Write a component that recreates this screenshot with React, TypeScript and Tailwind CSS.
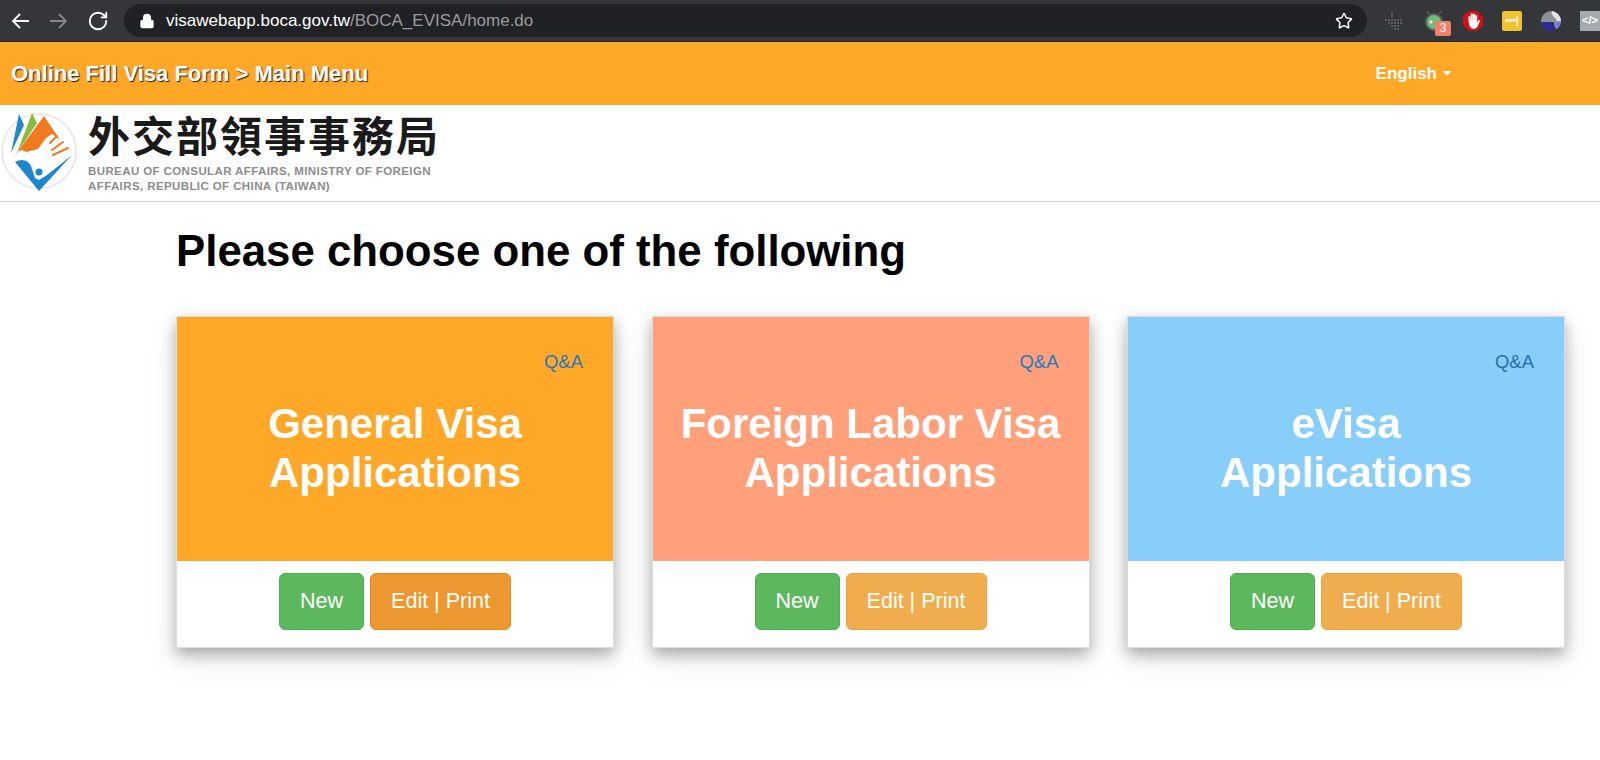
import React from 'react';
import { RotateCw, Lock, Star } from 'lucide-react';

const cards = [
  { title: ['General Visa', 'Applications'], bg: 'bg-[#ffa726]', edit: 'bg-[#ec972f] border-[#e08a1e]', qa: 'text-[#1f78c1]' },
  { title: ['Foreign Labor Visa', 'Applications'], bg: 'bg-[#ffa07a]', edit: 'bg-[#f0ad4e] border-[#eea236]', qa: 'text-[#1f78c1]' },
  { title: ['eVisa', 'Applications'], bg: 'bg-[#87cefa]', edit: 'bg-[#f0ad4e] border-[#eea236]', qa: 'text-[#2b6cb0]' },
];

const Logo = () => (
  <svg viewBox="0 108 80 90" className="w-[80px] h-[90px] shrink-0">
    <circle cx="39" cy="151" r="37" fill="white" stroke="#e4e4e4" strokeWidth="1.5" />
    <path d="M19 114 L24 125 L11 153 Z" fill="#2188d0" />
    <path d="M32 113 L37 123 L17 153 Z" fill="#84bd3a" />
    <path d="M44 116 L60 140 L52 134 L46 138 L38 149 L26 152 L22 150 L17 152 L13 158 Z" fill="#f07a1f" />
    <path d="M50 143 L57 136 M52 150 L63 142 M53 155 L68 148" stroke="#f07a1f" strokeWidth="2" strokeLinecap="round" />
    <path d="M15 162 C22 158 28 160 31 166 L35 178 L39 180 L47 175 L71 156 L39 191 Z" fill="#1b87cf" />
    <circle cx="39" cy="172" r="3.5" fill="#1b87cf" />
  </svg>
);

const Extensions = () => (
  <div className="flex items-center gap-[19px] ml-[18px]">
    <svg width="20" height="20" viewBox="0 0 20 20" fill="#5d5e62">
      <rect x="6" y="1" width="2" height="2" />
      <rect x="6" y="4" width="2" height="2" />
      <rect x="0" y="8" width="2" height="2" />
      <rect x="3" y="8" width="2" height="2" />
      <rect x="6" y="8" width="2" height="2" />
      <rect x="9" y="8" width="2" height="2" />
      <rect x="12" y="8" width="2" height="2" />
      <rect x="15" y="8" width="2" height="2" />
      <rect x="3" y="11" width="2" height="2" />
      <rect x="6" y="11" width="2" height="2" />
      <rect x="9" y="11" width="2" height="2" />
      <rect x="12" y="11" width="2" height="2" />
      <rect x="15" y="11" width="2" height="2" />
      <rect x="6" y="14" width="2" height="2" />
      <rect x="9" y="14" width="2" height="2" />
      <rect x="12" y="14" width="2" height="2" />
      <rect x="9" y="17" width="2" height="2" />
      <rect x="12" y="17" width="2" height="2" />
    </svg>
    <div className="relative w-5 h-5">
      <svg width="20" height="20" viewBox="0 0 20 20">
        <circle cx="10" cy="11" r="8" fill="#6cbf73" stroke="#5a5c60" strokeWidth="2" />
        <path d="M5 3 L3 0 M15 3 L17 0" stroke="#5a5c60" strokeWidth="1.5" />
        <circle cx="7" cy="11" r="1.5" fill="white" />
      </svg>
      <div className="absolute left-[11px] top-[10px] w-[16px] h-[15px] rounded-[2px] bg-[#f4806a] text-white text-[12px] leading-[15px] text-center">3</div>
    </div>
    <svg width="20" height="20" viewBox="0 0 20 20">
      <path d="M6 0 H14 L20 6 V14 L14 20 H6 L0 14 V6 Z" fill="#d50f14" />
      <path d="M6.5 11 V6 M8.8 10 V3.5 M11 10 V3.5 M13.2 10 V5 M7 11 C7 15 8 17 11 17 C14 17 14 13 16 10" stroke="white" strokeWidth="2" strokeLinecap="round" fill="none" />
      <path d="M7 9 H14 V16 H8 Z" fill="white" />
    </svg>
    <div className="flex items-center justify-center w-5 h-5 rounded-[2px] bg-[#f0c22e] text-white text-[10px] font-bold leading-none">•••|</div>
    <svg width="20" height="20" viewBox="0 0 20 20">
      <circle cx="10" cy="10" r="10" fill="#8e9095" />
      <path d="M0 11 H13 C13 16 15 18 16 18 A10 10 0 0 1 0 11 Z" fill="#2f2a8f" />
      <path d="M11 0 C16 1 20 5 20 10 L16 10 C15 6 9 5 11 0 Z" fill="#e2e2e4" />
      <path d="M15 11 H20 A10 10 0 0 1 17 17 C16 16 15 14 15 11 Z" fill="#6c7bf0" />
    </svg>
    <div className="flex items-center justify-center w-5 h-5 bg-[#a6a9b0] text-white text-[11px] font-bold leading-none">&lt;/&gt;</div>
  </div>
);

export default function App() {
  return (
    <div className="min-h-[760px] bg-white font-['Liberation_Sans','Noto_Sans_CJK_TC',sans-serif]">
      <div className="h-[42px] bg-[#35363a] flex items-center pl-[11px] border-b border-[#26272a]">
        <svg width="18" height="16" viewBox="0 0 18 16" fill="none" stroke="white" strokeWidth="1.8">
          <path d="M9 1 L2 8 L9 15 M2 8 H18" />
        </svg>
        <svg width="18" height="16" viewBox="0 0 18 16" fill="none" stroke="#85878a" strokeWidth="1.8" className="ml-[21px]">
          <path d="M9 1 L16 8 L9 15 M16 8 H0" />
        </svg>
        <RotateCw className="w-[22px] h-[22px] text-white ml-[19px]" strokeWidth={2} />
        <div className="ml-[15px] w-[1243px] h-[33px] rounded-full bg-[#202124] flex items-center pl-[15px] pr-[14px]">
          <Lock className="w-4 h-4 text-white fill-white" />
          <span className="ml-[11px] text-[17px] text-white">visawebapp.boca.gov.tw<span className="text-[#9a9b9e]">/BOCA_EVISA/home.do</span></span>
          <Star className="ml-auto w-[18px] h-[18px] text-white" strokeWidth={2} />
        </div>
        <Extensions />
      </div>

      <div className="h-[63px] bg-[#ffa726] flex items-center justify-between pl-[11px]">
        <span className="text-[22px] font-bold text-white [text-shadow:1px_1px_1px_#222]">Online Fill Visa Form &gt; Main Menu</span>
        <div className="flex items-center gap-[6px] mr-[149px] text-[17px] font-bold text-white">
          English
          <span className="w-0 h-0 border-x-[4.5px] border-x-transparent border-t-[5px] border-t-white" />
        </div>
      </div>

      <div className="h-[97px] flex items-start border-b border-[#d0d0d0]">
        <div className="mt-[3px]"><Logo /></div>
        <div className="ml-[8px] mt-[10px]">
          <div className="text-[42px] leading-[46px] font-bold tracking-[2px] text-[#1a1a1a]">外交部領事事務局</div>
          <div className="mt-[3px] text-[11.5px] leading-[14.5px] font-bold text-[#8c8c8c] tracking-[0.4px]">
            BUREAU OF CONSULAR AFFAIRS, MINISTRY OF FOREIGN<br />AFFAIRS, REPUBLIC OF CHINA (TAIWAN)
          </div>
        </div>
      </div>

      <div className="pl-[176px]">
        <h1 className="mt-[22px] text-[43.8px] leading-[54px] font-bold text-black">Please choose one of the following</h1>
        <div className="mt-[38px] flex gap-[37.5px]">
          {cards.map((c) => (
            <div key={c.title[0]} className="w-[438px] h-[332px] bg-white border border-[#dddddd] shadow-[0_6px_14px_rgba(0,0,0,0.3),0_14px_30px_rgba(0,0,0,0.08)]">
              <div className={`h-[244px] ${c.bg} flex flex-col`}>
                <div className={`mt-[34px] mr-[30px] text-right text-[18.5px] leading-[22px] ${c.qa}`}>Q&amp;A</div>
                <div className="mt-[26px] text-center text-[42px] leading-[49px] font-bold text-white">
                  {c.title[0]}<br />{c.title[1]}
                </div>
              </div>
              <div className="flex justify-center gap-[6px] pt-[12px]">
                <button className="w-[85px] h-[57px] rounded-[6px] bg-[#5cb85c] border border-[#4cae4c] text-white text-[21.5px]">New</button>
                <button className={`w-[141px] h-[57px] rounded-[6px] border text-white text-[21.5px] ${c.edit}`}>Edit | Print</button>
              </div>
            </div>
          ))}
        </div>
      </div>
    </div>
  );
}
